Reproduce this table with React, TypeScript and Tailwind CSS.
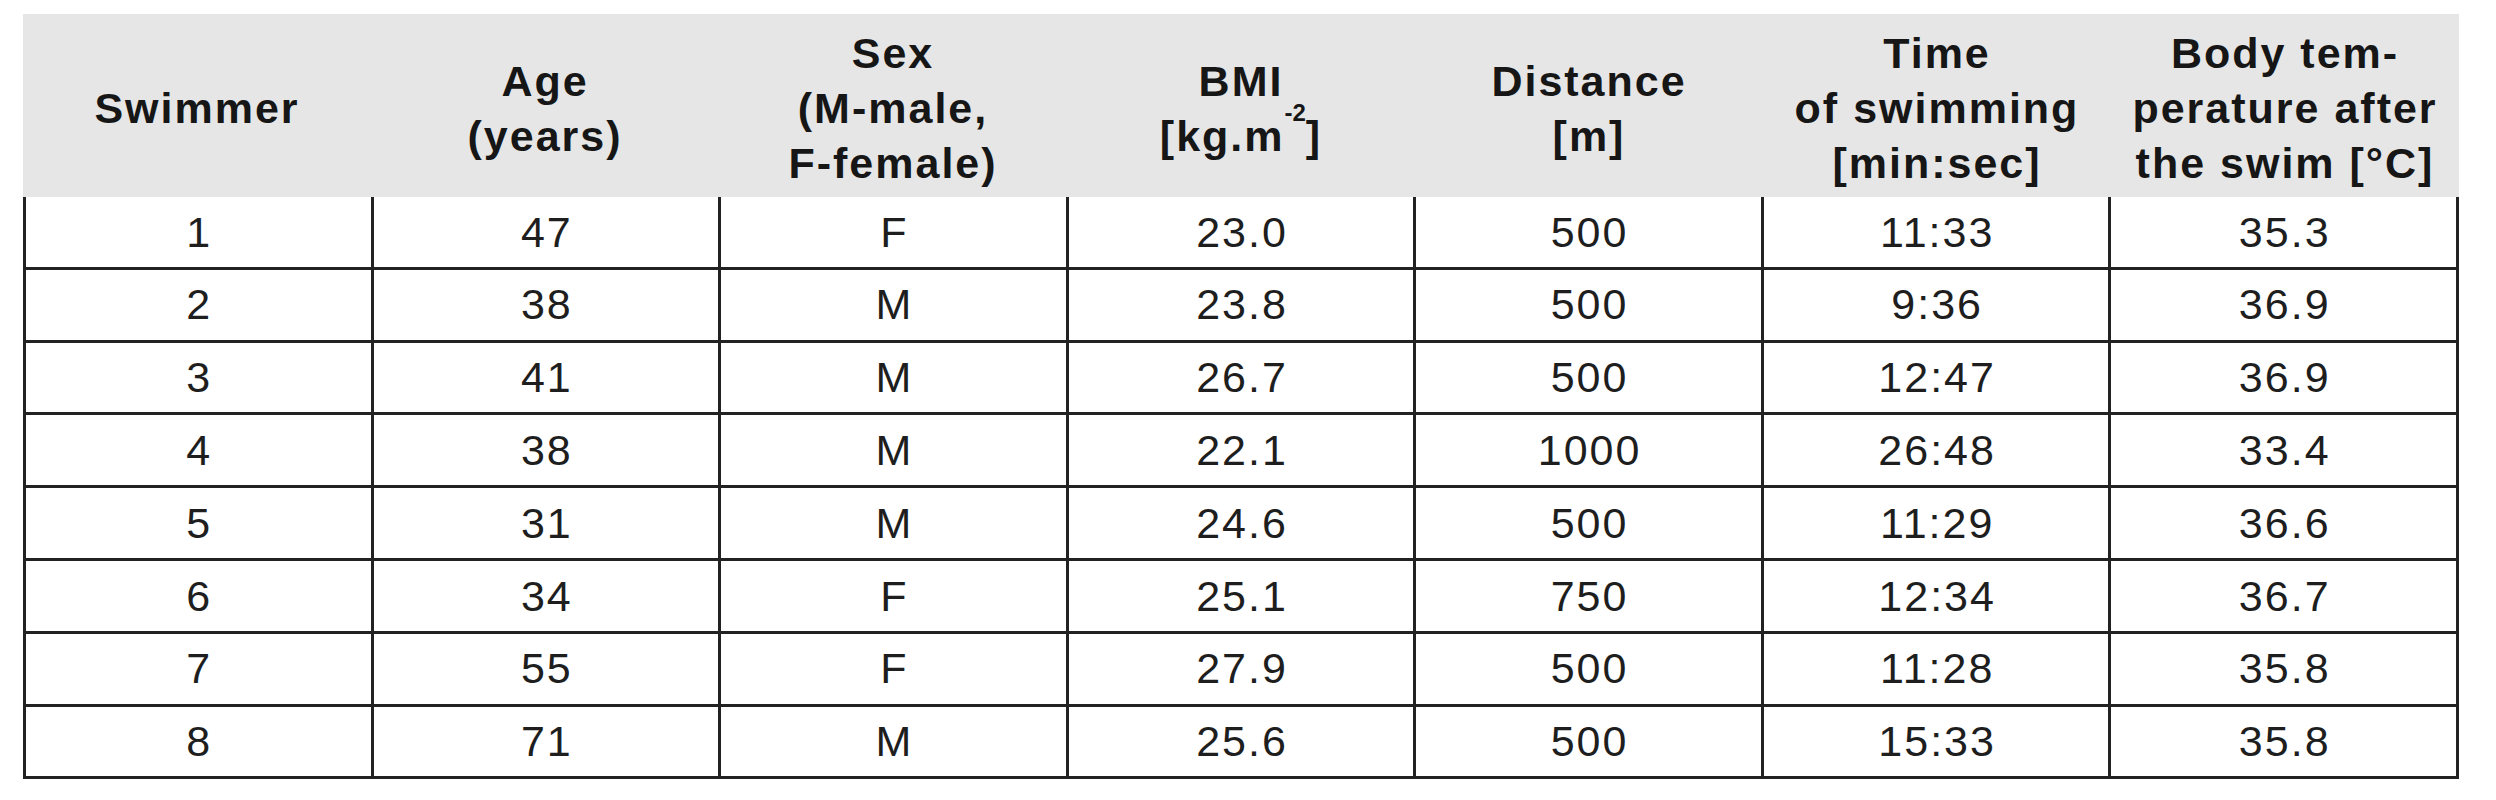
import React from "react";

const rows: string[][] = [
  ["1", "47", "F", "23.0", "500", "11:33", "35.3"],
  ["2", "38", "M", "23.8", "500", "9:36", "36.9"],
  ["3", "41", "M", "26.7", "500", "12:47", "36.9"],
  ["4", "38", "M", "22.1", "1000", "26:48", "33.4"],
  ["5", "31", "M", "24.6", "500", "11:29", "36.6"],
  ["6", "34", "F", "25.1", "750", "12:34", "36.7"],
  ["7", "55", "F", "27.9", "500", "11:28", "35.8"],
  ["8", "71", "M", "25.6", "500", "15:33", "35.8"],
];

export default function App() {
  return (
    <div
      className="w-[2496px] h-[800px] bg-white pt-[14px] pl-[23px]"
      style={{ fontFamily: '"Liberation Sans", Arial, sans-serif' }}
    >
      <div className="w-[2436px]">
        <div className="grid grid-cols-7 h-[183px] bg-[#e6e6e6] items-center text-center font-bold text-[43px] leading-[55px] tracking-[2px] text-[#161616] pt-[6px]">
          <div>Swimmer</div>
          <div>
            Age
            <br />
            (years)
          </div>
          <div>
            Sex
            <br />
            (M-male,
            <br />
            F-female)
          </div>
          <div>
            BMI
            <br />
            [kg.m<sup className="text-[24px] tracking-normal align-top relative top-[4px]">-2</sup>]
          </div>
          <div>
            Distance
            <br />
            [m]
          </div>
          <div>
            Time
            <br />
            of swimming
            <br />
            [min:sec]
          </div>
          <div>
            Body tem-
            <br />
            perature after
            <br />
            the swim [°C]
          </div>
        </div>
        <div className="border-l-[3px] border-[#222]">
          {rows.map((r, i) => (
            <div
              key={i}
              className="grid grid-cols-7 h-[72.8px] border-b-[3px] border-[#222]"
            >
              {r.map((c, j) => (
                <div
                  key={j}
                  className="flex items-center justify-center border-r-[3px] border-[#222] text-[43px] tracking-[2px] text-[#1e1e1e] pl-[2px]"
                >
                  {c}
                </div>
              ))}
            </div>
          ))}
        </div>
      </div>
    </div>
  );
}
